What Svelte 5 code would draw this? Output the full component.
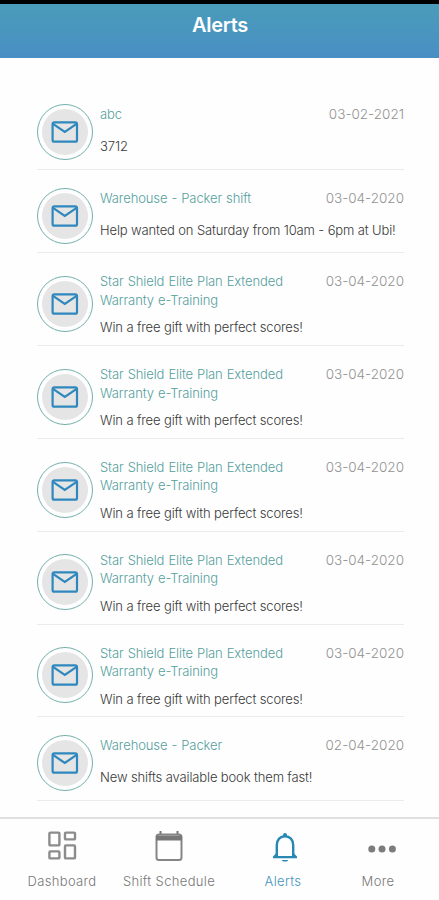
<script>
  const training = {
    title: 'Star Shield Elite Plan Extended Warranty e-Training',
    message: 'Win a free gift with perfect scores!',
    date: '03-04-2020',
    tall: true
  };
  const alerts = [
    { title: 'abc', message: '3712', date: '03-02-2021' },
    { title: 'Warehouse - Packer shift', message: 'Help wanted on Saturday from 10am - 6pm at Ubi!', date: '03-04-2020' },
    training, training, training, training, training,
    { title: 'Warehouse - Packer', message: 'New shifts available book them fast!', date: '02-04-2020' }
  ];
</script>

<div class="screen">
  <div class="status"></div>
  <header><h1>Alerts</h1></header>
  <main>
    {#each alerts as alert}
      <article class:tall={alert.tall}>
        <div class="badge">
          <div class="disc">
            <svg width="28" height="22" viewBox="0 0 28 22" fill="none" stroke="#2f88bd" stroke-width="2.2">
              <rect x="1.6" y="1.3" width="24.400" height="19.4" rx="1.8" />
              <path d="M2 2.8 13.800 11 25.600 2.8" />
            </svg>
          </div>
        </div>
        <div class="body">
          <div class="head">
            <h2>{alert.title}</h2>
            <time>{alert.date}</time>
          </div>
          <p>{alert.message}</p>
        </div>
      </article>
    {/each}
  </main>
  <nav>
    <a class="dash">
      <svg width="30" height="30" viewBox="0 0 30 30" fill="none" stroke="#8c8c8c" stroke-width="2.4">
        <rect x="2.4" y="1.6" width="10" height="12.8" rx="1" />
        <rect x="18" y="1.6" width="10" height="6.8" rx="1" />
        <rect x="2.4" y="20.4" width="10" height="7" rx="1" />
        <rect x="18" y="14.4" width="10" height="13" rx="1" />
      </svg>
      <span>Dashboard</span>
    </a>
    <a class="shift">
      <svg width="30" height="32" viewBox="0 0 30 32">
        <path d="M6.500 0v4M23.500 0v4" stroke="#777" stroke-width="2" />
        <rect x="2.500" y="3.500" width="25" height="25.4" rx="2.5" fill="none" stroke="#858585" stroke-width="2" />
        <path d="M2 4.500h26v5H2z" fill="#777" />
      </svg>
      <span>Shift Schedule</span>
    </a>
    <a class="bell">
      <svg width="26" height="32" viewBox="0 0 26 32">
        <circle cx="13" cy="3" r="2" fill="#2788b4" />
        <path d="M4.8 25V13.2C4.8 7.8 8.2 4.2 13 4.2s8.2 3.6 8.2 9V25" fill="none" stroke="#2788b4" stroke-width="2.4" />
        <path d="M4 21.5 1 24.5V26.3H25V24.5L22 21.5V24H4z" fill="#2788b4" />
        <path d="M9.8 28h6.4c-.5 2-5.900 2-6.400 0z" fill="#2788b4" />
      </svg>
      <span>Alerts</span>
    </a>
    <a class="more">
      <svg width="28" height="8" viewBox="0 0 28 8" fill="#7c7c7c">
        <circle cx="3.800" cy="4" r="3.500" /><circle cx="14" cy="4" r="3.500" /><circle cx="24.400" cy="4" r="3.500" />
      </svg>
      <span>More</span>
    </a>
  </nav>
</div>

<style>
  .screen {
    width: 439px;
    height: 900px;
    box-sizing: border-box;
    overflow: hidden;
    display: flex;
    flex-direction: column;
    background: #fefefe;
    font-family: Inter, "Liberation Sans", sans-serif;
    font-weight: 300;
  }
  .status { height: 4px; flex: none; background: #000; }
  header {
    height: 54px;
    flex: none;
    box-sizing: border-box;
    padding-top: 8.500px;
    background: linear-gradient(#4a9cba, #488fc4);
    text-align: center;
  }
  h1 {
    margin: 0;
    padding-left: 1px;
    color: #fff;
    font: 600 20px/25px Inter, sans-serif;
    letter-spacing: -0.3px;
  }
  main { flex: 1; min-height: 0; padding: 28px 35px 0 37px; }
  article {
    display: flex;
    align-items: center;
    gap: 7px;
    height: 83.700px;
    box-sizing: border-box;
    padding: 19px 0 9.500px;
    border-bottom: 1px solid #ebebeb;
  }
  article.tall { height: 92.800px; }
  .badge {
    width: 56px;
    height: 56px;
    flex: none;
    box-sizing: border-box;
    border: 1px solid #72b0ab;
    border-radius: 50%;
    display: flex;
    align-items: center;
    justify-content: center;
  }
  .disc {
    width: 46px;
    height: 46px;
    border-radius: 50%;
    background: #e5e5e5;
    display: flex;
    align-items: center;
    justify-content: center;
  }
  .body { flex: 1; align-self: flex-start; }
  .head { display: flex; justify-content: space-between; min-height: 23px; }
  h2 {
    width: 195px;
    margin: 0;
    color: #559e9d;
    font-size: 13px;
    font-weight: 300;
    line-height: 18.500px;
    letter-spacing: -0.1px;
    word-spacing: 0.5px;
  }
  time { color: #929292; font-size: 13.500px; line-height: 19px; white-space: nowrap; }
  p {
    margin: 9px 0 0;
    color: #383838;
    font-size: 13px;
    line-height: 18.500px;
    letter-spacing: -0.13px;
    white-space: nowrap;
  }
  nav {
    height: 83px;
    flex: none;
    box-sizing: border-box;
    border-top: 2px solid #e0e0e0;
    display: flex;
    color: #777;
    font-size: 13px;
    letter-spacing: 0.35px;
  }
  nav a {
    display: flex;
    flex-direction: column;
    align-items: center;
    justify-content: space-between;
    height: 71px;
    box-sizing: border-box;
    padding-top: 12px;
    white-space: nowrap;
  }
  nav span { line-height: 18px; }
  .dash { width: 124px; }
  .shift { width: 90px; }
  .bell { width: 138px; color: #4594c1; }
  .bell svg { margin: 1px 0 0 4px; }
  .more { width: 52px; padding-top: 26px; }
  .more svg { margin-left: 7px; }
</style>
